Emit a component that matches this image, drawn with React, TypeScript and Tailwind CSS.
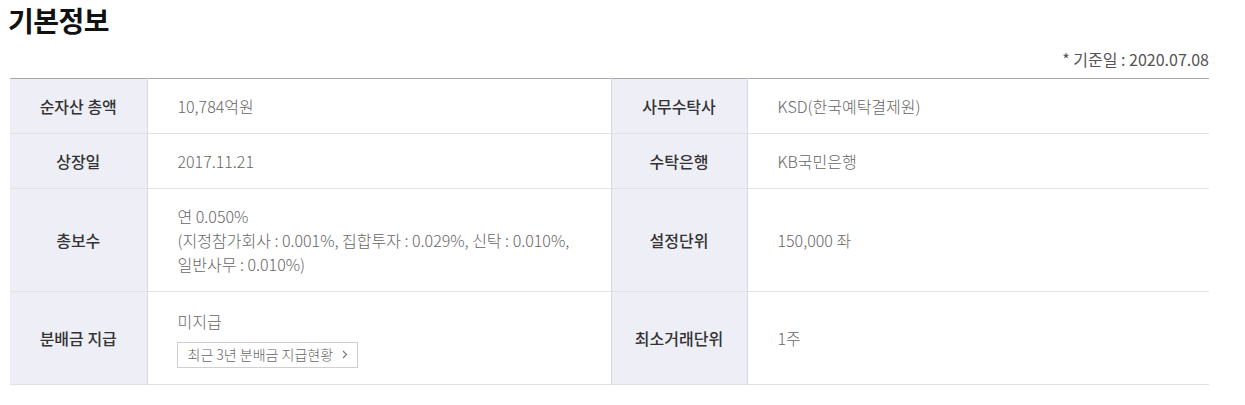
const font = { fontFamily: '"Noto Sans CJK KR", "Noto Sans", sans-serif' };

interface InfoRow {
  label1: string;
  value1: React.ReactNode;
  label2: string;
  value2: React.ReactNode;
  height: string;
}

const rows: InfoRow[] = [
  { label1: '순자산 총액', value1: '10,784억원', label2: '사무수탁사', value2: 'KSD(한국예탁결제원)', height: 'h-[55px]' },
  { label1: '상장일', value1: '2017.11.21', label2: '수탁은행', value2: 'KB국민은행', height: 'h-[55px]' },
  {
    label1: '총보수',
    value1: (
      <div className="leading-6">
        <div>연 0.050%</div>
        <div>(지정참가회사 : 0.001%, 집합투자 : 0.029%, 신탁 : 0.010%,</div>
        <div>일반사무 : 0.010%)</div>
      </div>
    ),
    label2: '설정단위',
    value2: '150,000 좌',
    height: 'h-[103px]',
  },
  {
    label1: '분배금 지급',
    value1: (
      <div className="flex flex-col items-start">
        <div className="leading-6">미지급</div>
        <button className="-ml-px mt-[9px] flex h-[26px] items-center border border-[#cfcfcf] bg-white pl-[10px] pr-[9px] text-[14px] text-[#666]">
          최근 3년 분배금 지급현황
          <svg className="ml-[9px]" width="6" height="9" viewBox="0 0 6 9" fill="none">
            <path d="M1 1l3.5 3.5L1 8" stroke="#777" strokeWidth="1.2" />
          </svg>
        </button>
      </div>
    ),
    label2: '최소거래단위',
    value2: '1주',
    height: 'h-[93px]',
  },
];

export default function App() {
  return (
    <div className="min-h-[405px] bg-white px-[10px] pt-[2px]" style={font}>
      <h1 className="-ml-[2px] text-[28px] font-bold leading-[36px] tracking-[-0.5px] text-[#111]">기본정보</h1>
      <div className="mr-[26px] mt-[10px] text-right text-[16px] leading-[22px] text-[#555]">* 기준일 : 2020.07.08</div>
      <table className="mt-[8px] w-[1199px] table-fixed border-collapse border-t border-t-[#a9a9a9]">
        <colgroup>
          <col className="w-[137px]" />
          <col className="w-[464px]" />
          <col className="w-[136px]" />
          <col className="w-[462px]" />
        </colgroup>
        <tbody>
          {rows.map(row => (
            <tr key={row.label1} className={`${row.height} border-b border-b-[#e1e1e6]`}>
              <th className="border-r border-r-[#d9d9e4] bg-[#eeeef7] text-center text-[16px] font-medium text-[#333]">{row.label1}</th>
              <td className="pl-[30px] text-[16px] font-light text-[#666]">{row.value1}</td>
              <th className="border-r border-l border-[#d9d9e4] bg-[#eeeef7] text-center text-[16px] font-medium text-[#333]">{row.label2}</th>
              <td className="pl-[30px] text-[16px] font-light text-[#666]">{row.value2}</td>
            </tr>
          ))}
        </tbody>
      </table>
    </div>
  );
}
